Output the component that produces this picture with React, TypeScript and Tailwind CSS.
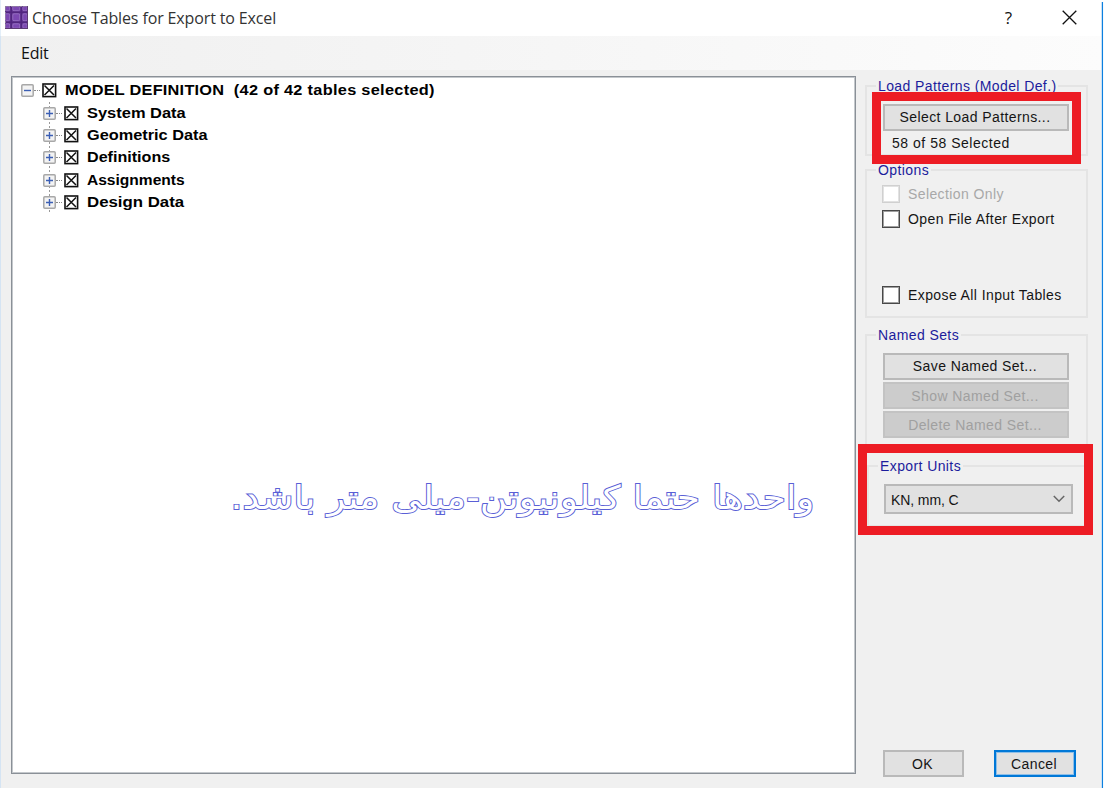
import type { ReactNode } from "react";

function AppIcon() {
  const cells = [
    { p: 0, s: 5 },
    { p: 7.5, s: 7.5 },
    { p: 17.5, s: 5 },
  ];
  return (
    <svg width="23" height="23" viewBox="0 0 23 23" className="mt-[6px] ml-[4px] shrink-0">
      <rect width="23" height="23" fill="#6a3a9a" />
      {cells.map((r, i) =>
        cells.map((c, j) => (
          <rect key={`${i}${j}`} x={c.p + 0.3} y={r.p + 0.3} width={c.s - 0.6} height={r.s - 0.6} rx="1.2" fill="#7c48b2" stroke="#9a76c4" strokeWidth="0.8" />
        )),
      )}
      <path d="M0 6.2H23M0 16.3H23M6.2 0V23M16.3 0V23" stroke="#51267f" strokeWidth="1.6" />
      <path d="M0 .5H23M.5 0V23" stroke="#8c7b9c" strokeWidth="1" strokeDasharray="2 1" />
      <path d="M0 22.5H23M22.5 0V23" stroke="#5c3a74" strokeWidth="1" />
    </svg>
  );
}

function Expander({ open = false }: { open?: boolean }) {
  return (
    <svg width="13" height="13" viewBox="0 0 13 13" className="shrink-0 bg-white">
      <rect x="0.8" y="0.8" width="11.4" height="11.4" rx="1" fill="#f3f3f3" stroke="#a8a8a8" strokeWidth="1.5" />
      <path d={open ? "M3 6.5H10" : "M3 6.5H10M6.5 3V10"} stroke="#3c5fb4" strokeWidth="1.4" />
    </svg>
  );
}

function CrossBox() {
  return (
    <svg width="15" height="15" viewBox="0 0 15 15" className="shrink-0">
      <rect x="1" y="1" width="12.6" height="12.6" fill="#fff" stroke="#111" strokeWidth="1.6" />
      <path d="M2.5 2.5L12 12M12 2.5L2.5 12" stroke="#111" strokeWidth="1.5" />
    </svg>
  );
}

function TreeRow({ label, scale = "scale-x-[1.165]" }: { label: string; scale?: string }) {
  return (
    <li className="flex h-[22.4px] items-center">
      <Expander />
      <span className="mr-[2px] w-[6px] border-t border-dotted border-[#8a8a8a]" />
      <CrossBox />
      <span className={`ml-[8px] origin-left whitespace-pre ${scale}`}>{label}</span>
    </li>
  );
}

function Group({ title, className, children }: { title: string; className: string; children: ReactNode }) {
  return (
    <fieldset className={`border-2 border-[#e4e4e4] ${className}`}>
      <legend className="ml-[9px] h-[18px] px-[2px] leading-[18px] whitespace-nowrap text-[#1c1c9c]">{title}</legend>
      {children}
    </fieldset>
  );
}

function Check({ label, disabled = false }: { label: string; disabled?: boolean }) {
  return (
    <label className="flex h-[18px] items-center">
      <span
        className={`size-[18px] border bg-white outline -outline-offset-2 ${disabled ? "border-[#d0d0d0] outline-[#e2e2e2]" : "border-[#484848] outline-[#a0a0a0]"}`}
      />
      <span className={`ml-[8px] whitespace-nowrap ${disabled ? "text-[#a8a8a8]" : "text-[#151515]"}`}>{label}</span>
    </label>
  );
}

function Button({ label, className }: { label: string; className: string }) {
  return (
    <button className={`flex h-[27px] items-center justify-center border-2 pr-[2px] whitespace-nowrap ${className}`}>{label}</button>
  );
}

const normal = "border-[#b9b9b9] bg-[#e1e1e1] text-[#151515]";
const dim = "border-[#c3c3c3] bg-[#cccccc] pt-[2px] text-[#a0a0a0]";

export default function App() {
  return (
    <div className="relative flex h-[790px] w-[1104px] flex-col overflow-hidden bg-white font-['Liberation_Sans',sans-serif] text-[14px] tracking-[0.4px]">
      <header className="flex h-[36px] shrink-0 items-start border-l border-[#e3eef8]">
        <AppIcon />
        <h1 className="ml-[4px] flex-1 pt-[7px] font-['Open_Sans',sans-serif] text-[16px] leading-[22px] tracking-[-0.13px] text-[#333]">Choose Tables for Export to Excel</h1>
        <span className="mt-[7px] mr-[50px] font-['Open_Sans',sans-serif] text-[17px] leading-[22px] tracking-normal text-[#111]">?</span>
        <svg width="15" height="15" viewBox="0 0 15 15" className="mt-[10px] mr-[27px]">
          <path d="M.7 .7L14.3 14.3M14.3 .7L.7 14.3" stroke="#111" strokeWidth="1.3" />
        </svg>
      </header>
      <nav className="flex h-[34px] shrink-0 items-center border-l border-[#d5e4f3] bg-linear-to-r from-[#f0f0f0] to-[#fcfcfc] pl-[20px] font-['Open_Sans',sans-serif] text-[16px] tracking-[-0.2px] text-[#111]">Edit</nav>
      <main className="flex h-[718px] shrink-0 border-l border-[#d5e4f3] bg-[#f0f0f0]">
        <section className="mt-[6px] ml-[10px] flex h-[698px] w-[845px] flex-col border border-[#8a9097] bg-white font-bold tracking-normal text-black outline outline-[#c4c8cc] -outline-offset-2">
          <div className="mt-[2px] ml-[9px] flex h-[22px] items-center">
            <Expander open />
            <span className="mr-[2px] w-[6px] border-t border-dotted border-[#8a8a8a]" />
            <CrossBox />
            <span className="ml-[8px] flex origin-left scale-x-[1.165] whitespace-pre">
              <span className="tracking-[0.2px]">{"MODEL DEFINITION  "}</span>
              <span className="tracking-[0.26px]">(42 of 42 tables selected)</span>
            </span>
          </div>
          <ul className="mt-[1px] ml-[31px] h-[112px] bg-[linear-gradient(#999_50%,transparent_50%)] bg-[length:1px_4px] bg-[position:6px_0] bg-repeat-y">
            <TreeRow label="System Data" scale="scale-x-[1.175]" />
            <TreeRow label="Geometric Data" />
            <TreeRow label="Definitions" scale="scale-x-[1.15]" />
            <TreeRow label="Assignments" scale="scale-x-[1.11]" />
            <TreeRow label="Design Data" scale="scale-x-[1.2]" />
          </ul>
          <div dir="rtl" className="mt-[258px] mr-[41px] flex h-[52px]">
            <p className="origin-right scale-x-[1.135] font-['DejaVu_Sans',sans-serif] text-[33px] leading-[52px] font-normal whitespace-nowrap text-white [paint-order:stroke_fill] [-webkit-text-stroke:1.8px_#5a5fd6]">واحدها حتما کیلونیوتن-میلی متر باشد.</p>
          </div>
        </section>
        <aside className="ml-[9px] flex w-[237px] flex-col pt-[7px]">
          <Group title="Load Patterns (Model Def.)" className="h-[79px] w-[223px]">
            <Button label="Select Load Patterns..." className={`mt-[9px] ml-[16px] w-[186px] ${normal}`} />
            <p className="mt-[3px] ml-[25px] leading-[18px] tracking-[0.52px] text-[#151515]">58 of 58 Selected</p>
          </Group>
          <Group title="Options" className="mt-[5px] h-[157px] w-[223px]">
            <div className="mt-[6px] ml-[15px] flex flex-col">
              <Check label="Selection Only" disabled />
              <div className="mt-[7px]"><Check label="Open File After Export" /></div>
              <div className="mt-[58px]"><Check label="Expose All Input Tables" /></div>
            </div>
          </Group>
          <Group title="Named Sets" className="mt-[8px] h-[124px] w-[223px]">
            <div className="mt-[9px] ml-[16px] flex w-[186px] flex-col gap-[2px]">
              <Button label="Save Named Set..." className={normal} />
              <Button label="Show Named Set..." className={dim} />
              <Button label="Delete Named Set..." className={dim} />
            </div>
          </Group>
          <Group title="Export Units" className="mt-[7px] ml-[2px] h-[70px] w-[221px]">
            <div className="mt-[9px] ml-[15px] flex h-[30px] w-[189px] items-center justify-between border-2 border-[#b9b9b9] bg-[#e1e1e1] pr-[6px] pl-[5px] text-[#151515]">
              <span className="pt-[2px] tracking-[-0.1px]">KN, mm, C</span>
              <svg width="12" height="8" viewBox="0 0 12 8"><path d="M.8 1L6 6.3L11.2 1" fill="none" stroke="#666" strokeWidth="1.5" /></svg>
            </div>
          </Group>
          <div className="mt-[223px] ml-[18px] flex gap-[30px]">
            <Button label="OK" className={`w-[81px] pt-[2px] ${normal}`} />
            <Button label="Cancel" className="w-[82px] border-[#0078d7] bg-[#e1e1e1] pt-[2px] text-[#151515] inset-shadow-[0_0_0_1px_#8fbfe8]" />
          </div>
        </aside>
      </main>
      <div className="absolute top-[2px] left-[1101px] h-[786px] w-[3px] border-r border-l border-r-[#f4faff] border-l-[#c9e0f4] bg-[#0c80e0]" />
      <div className="absolute top-[92px] left-[872px] h-[72px] w-[209px] border-9 border-[#ed1c24]" />
      <div className="absolute top-[444px] left-[858px] h-[91px] w-[235px] border-9 border-[#ed1c24]" />
    </div>
  );
}
